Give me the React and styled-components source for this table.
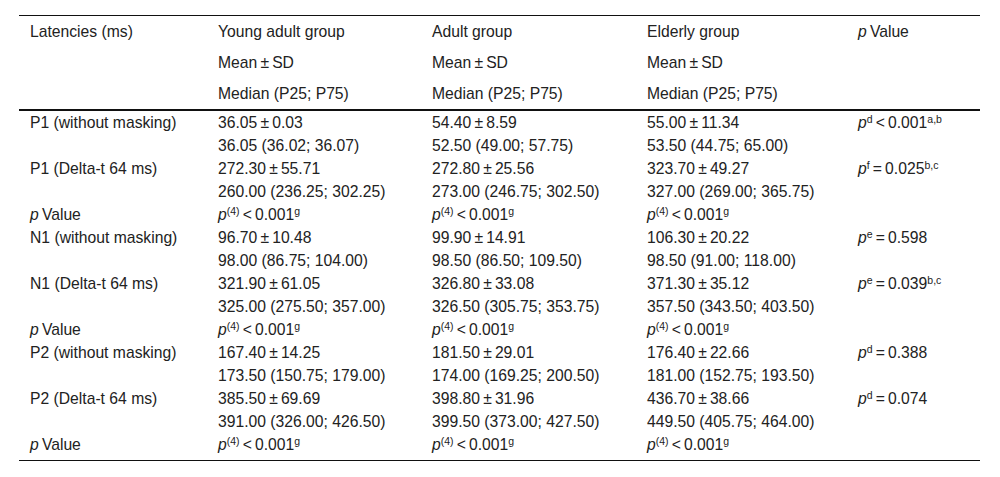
import React from "react";
import styled, { createGlobalStyle } from "styled-components";

const GlobalStyle = createGlobalStyle`
  body {
    margin: 0;
    background: #fff;
    font-family: "Liberation Sans", Arial, Helvetica, sans-serif;
    color: #222;
  }
`;

const T = "\u2009";

const groups = ["Young adult group", "Adult group", "Elderly group"];

const pRow = { label: "pvalue", cells: ["p4", "p4", "p4"] };

const rows = [
  {
    label: "P1 (without masking)",
    cells: [
      ["36.05", "0.03", "36.05 (36.02; 36.07)"],
      ["54.40", "8.59", "52.50 (49.00; 57.75)"],
      ["55.00", "11.34", "53.50 (44.75; 65.00)"],
    ],
    p: { test: "d", op: "<", value: "0.001", note: "a,b" },
  },
  {
    label: "P1 (Delta-t 64 ms)",
    cells: [
      ["272.30", "55.71", "260.00 (236.25; 302.25)"],
      ["272.80", "25.56", "273.00 (246.75; 302.50)"],
      ["323.70", "49.27", "327.00 (269.00; 365.75)"],
    ],
    p: { test: "f", op: "=", value: "0.025", note: "b,c" },
  },
  pRow,
  {
    label: "N1 (without masking)",
    cells: [
      ["96.70", "10.48", "98.00 (86.75; 104.00)"],
      ["99.90", "14.91", "98.50 (86.50; 109.50)"],
      ["106.30", "20.22", "98.50 (91.00; 118.00)"],
    ],
    p: { test: "e", op: "=", value: "0.598" },
  },
  {
    label: "N1 (Delta-t 64 ms)",
    cells: [
      ["321.90", "61.05", "325.00 (275.50; 357.00)"],
      ["326.80", "33.08", "326.50 (305.75; 353.75)"],
      ["371.30", "35.12", "357.50 (343.50; 403.50)"],
    ],
    p: { test: "e", op: "=", value: "0.039", note: "b,c" },
  },
  pRow,
  {
    label: "P2 (without masking)",
    cells: [
      ["167.40", "14.25", "173.50 (150.75; 179.00)"],
      ["181.50", "29.01", "174.00 (169.25; 200.50)"],
      ["176.40", "22.66", "181.00 (152.75; 193.50)"],
    ],
    p: { test: "d", op: "=", value: "0.388" },
  },
  {
    label: "P2 (Delta-t 64 ms)",
    cells: [
      ["385.50", "69.69", "391.00 (326.00; 426.50)"],
      ["398.80", "31.96", "399.50 (373.00; 427.50)"],
      ["436.70", "38.66", "449.50 (405.75; 464.00)"],
    ],
    p: { test: "d", op: "=", value: "0.074" },
  },
  pRow,
];

const Page = styled.div`
  padding: 15px 20px 0 19px;
`;

const Table = styled.table`
  width: 961px;
  border-collapse: collapse;
  table-layout: fixed;
  font-size: 15.7px;
  border-top: 1px solid #111;
  border-bottom: 1px solid #111;
`;

const Col = styled.col`
  width: ${(p) => p.$w}px;
`;

const Head = styled.thead`
  border-bottom: 2px solid #111;
`;

const Th = styled.th`
  text-align: left;
  font-weight: normal;
  vertical-align: top;
  padding: 0 0 0 11px;
`;

const HeadLine = styled.div`
  height: 31px;
  line-height: 31px;
  white-space: nowrap;
`;

const Td = styled.td`
  vertical-align: top;
  padding: 0 0 0 11px;
  white-space: nowrap;
`;

const Line = styled.div`
  height: 23px;
  line-height: 23px;
`;

const LastRow = styled.tr`
  td {
    padding-bottom: 4px;
  }
`;

const I = styled.i`
  font-style: italic;
`;

const Sup = styled.sup`
  font-size: 10.5px;
  line-height: 0;
  vertical-align: 0.5em;
`;

const PValue = () => (
  <>
    <I>p</I>{T}Value
  </>
);

const PCompare = () => (
  <>
    <I>p</I>
    <Sup>(4)</Sup>
    {T}&lt;{T}0.001<Sup>g</Sup>
  </>
);

const PTest = ({ test, op, value, note }) => (
  <>
    <I>p</I>
    <Sup>{test}</Sup>
    {T}
    {op}
    {T}
    {value}
    {note && <Sup>{note}</Sup>}
  </>
);

export default function App() {
  return (
    <Page>
      <GlobalStyle />
      <Table>
        <colgroup>
          <Col $w={188} />
          <Col $w={214} />
          <Col $w={215} />
          <Col $w={211} />
          <Col $w={133} />
        </colgroup>
        <Head>
          <tr>
            <Th>
              <HeadLine>Latencies (ms)</HeadLine>
            </Th>
            {groups.map((g) => (
              <Th key={g}>
                <HeadLine>{g}</HeadLine>
                <HeadLine>Mean{T}±{T}SD</HeadLine>
                <HeadLine>Median (P25; P75)</HeadLine>
              </Th>
            ))}
            <Th>
              <HeadLine>
                <PValue />
              </HeadLine>
            </Th>
          </tr>
        </Head>
        <tbody>
          {rows.map((r, i) => {
            const Row = i === rows.length - 1 ? LastRow : "tr";
            if (r.label === "pvalue") {
              return (
                <Row key={i}>
                  <Td>
                    <Line>
                      <PValue />
                    </Line>
                  </Td>
                  {r.cells.map((_, j) => (
                    <Td key={j}>
                      <Line>
                        <PCompare />
                      </Line>
                    </Td>
                  ))}
                  <Td />
                </Row>
              );
            }
            return (
              <Row key={i}>
                <Td>
                  <Line>{r.label}</Line>
                </Td>
                {r.cells.map(([mean, sd, median], j) => (
                  <Td key={j}>
                    <Line>
                      {mean}
                      {T}±{T}
                      {sd}
                    </Line>
                    <Line>{median}</Line>
                  </Td>
                ))}
                <Td>
                  <Line>
                    <PTest {...r.p} />
                  </Line>
                </Td>
              </Row>
            );
          })}
        </tbody>
      </Table>
    </Page>
  );
}
